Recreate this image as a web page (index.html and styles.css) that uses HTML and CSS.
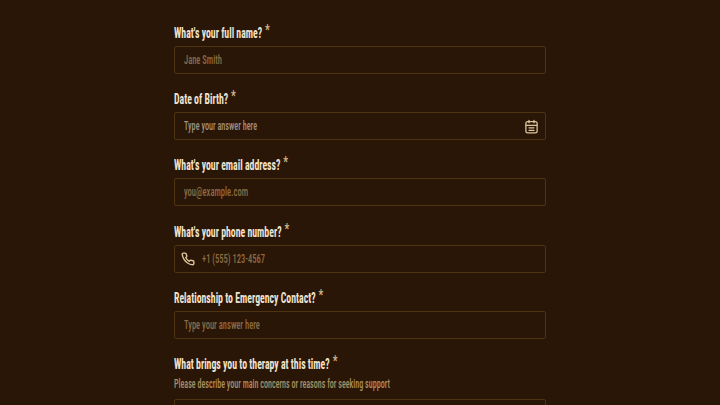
FILE: index.html
```html
<!DOCTYPE html>
<html lang="en">
<head>
    <title>Therapy Intake Form</title>
    <link rel="stylesheet" href="styles.css">
</head>
<body>
<form class="intake-form">
    <div class="form-group">
        <label class="question">What's your full name? <span class="required">*</span></label>
        <div class="field"><span class="placeholder">Jane Smith</span></div>
    </div>

    <div class="form-group">
        <label class="question">Date of Birth? <span class="required">*</span></label>
        <div class="field">
            <span class="placeholder light">Type your answer here</span>
            <svg class="calendar-icon" viewBox="0 0 24 24" fill="none" stroke="currentColor" stroke-width="2" stroke-linecap="round" stroke-linejoin="round">
                <rect x="3" y="4" width="18" height="18" rx="3"/>
                <path d="M8 2v4M16 2v4M3 10h18"/>
                <path d="M8 14h8M8 18h8"/>
            </svg>
        </div>
    </div>

    <div class="form-group">
        <label class="question">What's your email address? <span class="required">*</span></label>
        <div class="field"><span class="placeholder">you@example.com</span></div>
    </div>

    <div class="form-group">
        <label class="question">What's your phone number? <span class="required">*</span></label>
        <div class="field">
            <svg class="phone-icon" viewBox="0 0 24 24" fill="none" stroke="currentColor" stroke-width="2.4" stroke-linecap="round" stroke-linejoin="round">
                <path d="M22 16.900v3a2 2 0 0 1-2.200 2 19.800 19.800 0 0 1-8.600-3.100 19.500 19.500 0 0 1-6-6A19.800 19.800 0 0 1 2.100 4.200 2 2 0 0 1 4.100 2h3a2 2 0 0 1 2 1.700c.1 1 .4 1.900.7 2.800a2 2 0 0 1-.5 2.100L8.100 9.900a16 16 0 0 0 6 6l1.300-1.300a2 2 0 0 1 2.100-.4c.9.3 1.800.6 2.800.7a2 2 0 0 1 1.700 2z"/>
            </svg>
            <span class="placeholder">+1 (555) 123-4567</span>
        </div>
    </div>

    <div class="form-group">
        <label class="question">Relationship to Emergency Contact? <span class="required">*</span></label>
        <div class="field"><span class="placeholder">Type your answer here</span></div>
    </div>

    <div class="form-group">
        <label class="question">What brings you to therapy at this time? <span class="required">*</span></label>
        <div class="hint">Please describe your main concerns or reasons for seeking support</div>
        <div class="field tall"></div>
    </div>
</form>
</body>
</html>
```

FILE: styles.css
```css
body {
    margin: 0;
    background-color: #2a1606;
    font-family: Roboto, "Liberation Sans", sans-serif;
    font-stretch: 75%;
    overflow: hidden;
}

.intake-form {
    width: 372px;
    margin: 0 auto;
    padding-top: 24px;
}

.form-group {
    margin-bottom: 16.2px;
}

/* the text is squeezed further than any installed font goes */
.question {
    display: block;
    width: 150%;
    height: 22px;
    font-size: 14px;
    line-height: 18px;
    font-weight: 700;
    color: #f0e2cf;
    white-space: nowrap;
    transform: scaleX(0.7);
    transform-origin: left;
}

.required {
    position: relative;
    top: -3px;
    margin-left: 1px;
    color: #cdb48e;
    font-size: 15px;
}

.hint {
    width: 160%;
    height: 14px;
    margin-bottom: 8px;
    font-size: 13px;
    line-height: 14px;
    font-weight: 500;
    color: #a98f62;
    white-space: nowrap;
    transform: scaleX(0.62);
    transform-origin: left;
}

.field {
    box-sizing: border-box;
    height: 28px;
    display: flex;
    align-items: center;
    padding: 0 6px 0 9px;
    border: 1px solid #4f3210;
    border-radius: 2px;
}

.field.tall {
    height: 60px;
}

.placeholder {
    flex: 1;
    margin-top: -1px;
    font-size: 13px;
    font-weight: 500;
    color: #8a6c45;
    white-space: nowrap;
    transform: scaleX(0.655);
    transform-origin: left;
}

.placeholder.light {
    color: #a09080;
    transform: scaleX(0.63);
}

.calendar-icon {
    width: 15px;
    height: 15px;
    color: #dcc59c;
}

.phone-icon {
    width: 14px;
    height: 14px;
    margin-right: 7px;
    margin-left: -3px;
    color: #dcc59c;
}
```
